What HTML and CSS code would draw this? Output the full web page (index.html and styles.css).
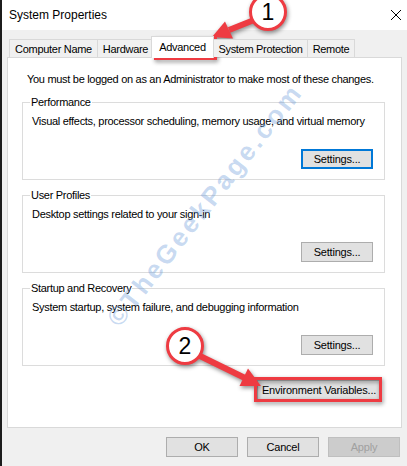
FILE: index.html
```html
<!DOCTYPE html>
<html lang="en">
<head>
  <meta charset="UTF-8">
  <meta name="viewport" content="width=device-width, initial-scale=1.0">
  <title>System Properties</title>
  <link rel="stylesheet" href="styles.css">
</head>
<body>
  <div class="window">
    <div class="titlebar">
      <span class="title">System Properties</span>
      <svg class="close" width="12" height="12" viewBox="0 0 12 12">
        <path d="M1 1 L11 11 M11 1 L1 11" stroke="#000" stroke-width="1" fill="none"/>
      </svg>
    </div>

    <div class="content">
      <div class="tabs">
        <div class="tab tab-computer">Computer Name</div>
        <div class="tab tab-hardware">Hardware</div>
        <div class="tab tab-advanced active">Advanced</div>
        <div class="tab tab-protection">System Protection</div>
        <div class="tab tab-remote">Remote</div>
      </div>

      <div class="panel">
        <p class="note">You must be logged on as an Administrator to make most of these changes.</p>

        <fieldset class="group">
          <legend>Performance</legend>
          <p class="desc">Visual effects, processor scheduling, memory usage, and virtual memory</p>
          <div class="group-actions">
            <button class="btn focused">Settings...</button>
          </div>
        </fieldset>

        <fieldset class="group">
          <legend>User Profiles</legend>
          <p class="desc">Desktop settings related to your sign-in</p>
          <div class="group-actions">
            <button class="btn">Settings...</button>
          </div>
        </fieldset>

        <fieldset class="group">
          <legend>Startup and Recovery</legend>
          <p class="desc">System startup, system failure, and debugging information</p>
          <div class="group-actions">
            <button class="btn">Settings...</button>
          </div>
        </fieldset>

        <div class="env-row">
          <button class="btn env">Environment Variables...</button>
        </div>
      </div>

      <div class="footer">
        <button class="btn">OK</button>
        <button class="btn">Cancel</button>
        <button class="btn" disabled>Apply</button>
      </div>
    </div>

    <div class="watermark">©TheGeekPage.com</div>

    <!-- tutorial markers drawn over the dialog -->
    <svg class="markers" width="407" height="466" viewBox="0 0 407 466">
      <g class="marker">
        <rect x="155.5" y="38.5" width="60" height="20" fill="none" stroke="#ee3b42" stroke-width="3"/>
        <line x1="254" y1="20" x2="229" y2="30" stroke="#ee3b42" stroke-width="6"/>
        <polygon points="212,37 225,21.5 233,38.5" fill="#ee3b42"/>
        <circle cx="268" cy="12" r="17.5" fill="#fff" stroke="#ee3b42" stroke-width="3"/>
      </g>
      <text x="268" y="20" class="num">1</text>

      <g class="marker">
        <rect x="255.5" y="378.5" width="125" height="22" fill="none" stroke="#ee3b42" stroke-width="3"/>
        <line x1="200" y1="356" x2="245" y2="378" stroke="#ee3b42" stroke-width="6"/>
        <polygon points="261,386 239.5,386 248,368.5" fill="#ee3b42"/>
        <circle cx="185" cy="346" r="17.5" fill="#fff" stroke="#ee3b42" stroke-width="3"/>
      </g>
      <text x="185" y="354" class="num">2</text>
    </svg>
  </div>
</body>
</html>
```

FILE: styles.css
```css
body {
  margin: 0;
  background: #1c1c1c;
  font-family: "Liberation Sans", Arial, sans-serif;
  font-size: 11px;
  letter-spacing: -0.3px;
  color: #000;
}

.window {
  position: relative;
  margin-left: 2px;
  width: 405px;
  height: 466px;
  background: #f0f0f0;
  overflow: hidden;
}

.titlebar {
  height: 30px;
  background: #fff;
  display: flex;
  align-items: center;
  justify-content: space-between;
  padding: 0 5px 0 7px;
}

.title {
  font-size: 12px;
  letter-spacing: 0;
}

.content {
  padding: 6px 5px 0 5px;
}

.tabs {
  display: flex;
  align-items: flex-end;
  padding-left: 2px;
  height: 21px;
  position: relative;
  z-index: 1;
}

.tab {
  height: 18px;
  line-height: 18px;
  text-align: center;
  white-space: nowrap;
  background: #f0f0f0;
  border: 1px solid #d9d9d9;
  border-bottom: none;
  box-sizing: border-box;
  margin-right: -1px;
}

.tab-computer { width: 89px; }
.tab-hardware { width: 57px; }
.tab-advanced { width: 63px; }
.tab-protection { width: 95px; margin-left: 1px; }
.tab-remote { width: 48px; }

.tab.active {
  height: 22px;
  line-height: 20px;
  background: #fff;
  margin-left: -2px;
  margin-right: -2px;
  margin-bottom: -1px;
}

.panel {
  background: #fff;
  border: 1px solid #d9d9d9;
  height: 371px;
  padding: 15px 16px 0 14px;
  box-sizing: border-box;
}

.note {
  margin: 0 0 10px 5px;
  line-height: 13px;
  white-space: nowrap;
}

.group {
  margin: 0 0 9px 0;
  padding: 0 11px 10px 9px;
  border: 1px solid #dcdcdc;
  min-width: 0;
}

.group legend {
  padding: 0 1px;
  margin-left: -2px;
  line-height: 13px;
}

.desc {
  margin: 6px 0 0 0;
  line-height: 13px;
  white-space: nowrap;
}

.group-actions {
  display: flex;
  justify-content: flex-end;
  margin-top: 21px;
}

.btn {
  font-family: inherit;
  font-size: 11px;
  letter-spacing: -0.2px;
  height: 20px;
  width: 72px;
  padding: 0;
  background: #e1e1e1;
  border: 1px solid #adadad;
  color: #000;
}

.btn.focused {
  border: 2px solid #0078d7;
}

.btn:disabled {
  background: #cccccc;
  border-color: #bfbfbf;
  color: #a0a0a0;
}

.env-row {
  display: flex;
  justify-content: flex-end;
  margin-top: 14px;
  margin-right: 4px;
}

.btn.env {
  width: 124px;
}

.footer {
  display: flex;
  justify-content: flex-end;
  gap: 9px;
  padding: 9px 2px 0 0;
}

.watermark {
  position: absolute;
  left: 203px;
  top: 205px;
  transform: translate(-50%, -50%) rotate(-52deg);
  font-size: 26px;
  font-weight: bold;
  letter-spacing: 3px;
  color: rgba(100, 150, 215, 0.36);
  white-space: nowrap;
  pointer-events: none;
}

.markers {
  position: absolute;
  top: 0;
  left: -2px;
}

.marker {
  filter: drop-shadow(1px 2px 2px rgba(0, 0, 0, 0.45));
}

.num {
  font-family: "Liberation Sans", Arial, sans-serif;
  font-size: 23px;
  letter-spacing: 0;
  text-anchor: middle;
  fill: #000;
}
```
